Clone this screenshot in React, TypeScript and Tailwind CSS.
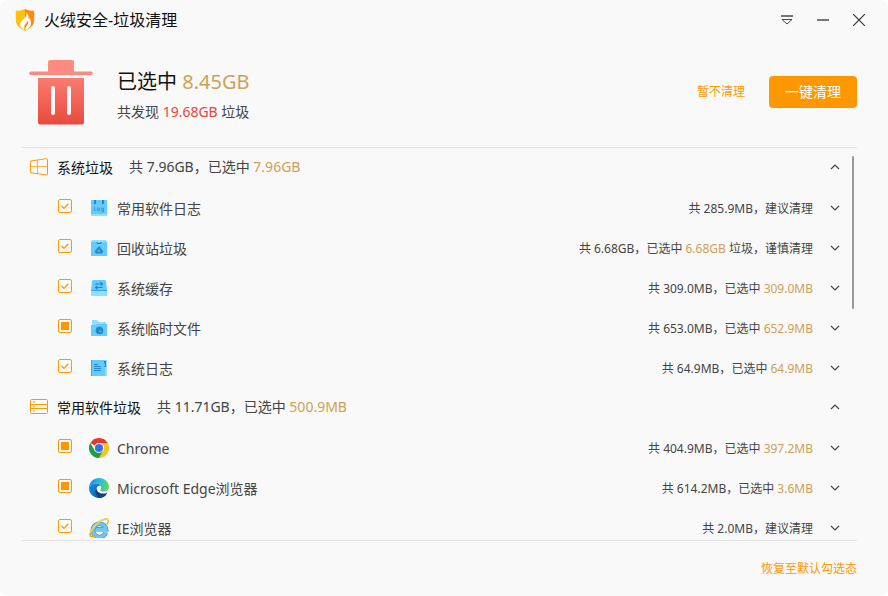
import { useEffect, useRef, useState, type ReactNode } from "react";

type CheckState = "checked" | "partial" | "none";

interface Item {
  name: string;
  icon: ReactNode;
  state: CheckState;
  total: string;
  selected?: string;
  advice?: string;
}

interface Group {
  name: string;
  icon: ReactNode;
  total: string;
  selected: string;
  items: Item[];
}

function ShieldLogo() {
  return (
    <svg width="20" height="22" viewBox="0 0 20 22" aria-hidden="true">
      <path d="M10 0C7 1.4 4 1.8.8 1.8V11c0 5 3.6 8.400 9.200 10.800Z" fill="#ffc010" />
      <path d="M10 0c3 1.400 6 1.800 9.200 1.800V11c0 5-3.600 8.400-9.200 10.800Z" fill="#ff8a0c" />
      <path
        d="M11.500 3.500c.4 3-1 4.500-3 6.500-2 2.100-3.800 4-3.300 6.600.4 2 2.300 3.200 4.200 4.200-.9-1.400-1-2.700-.1-4.200l4-5c.3 2.500-.6 4-2 5.600-1 1.200-1 2.600-.5 3.800 3.700-1.600 5.500-4.300 5.200-7.500-.2-1.900-.9-3-1-4.700-.3.800-.7 1.200-1.300 1.500.1-2.800-.3-5-2.200-6.800Z"
        fill="#fff"
      />
    </svg>
  );
}

function TrashIcon() {
  return (
    <svg width="64" height="65" viewBox="0 0 64 65" className="shrink-0" aria-hidden="true">
      <defs>
        <linearGradient id="trash" x1="0" y1="0" x2="0" y2="1">
          <stop offset="0" stopColor="#fa7b70" />
          <stop offset="1" stopColor="#e84b3c" />
        </linearGradient>
      </defs>
      <path d="M19 11.500V2a2 2 0 0 1 2-2h22a2 2 0 0 1 2 2v9.500h17a1.800 1.800 0 0 1 0 3.600H2a1.800 1.800 0 0 1 0-3.600Z" fill="#ff8a80" />
      <path
        d="M9 18h46v44.500a2 2 0 0 1-2 2H11a2 2 0 0 1-2-2ZM24 26a2 2 0 0 0-2 2v25a2 2 0 0 0 4 0V28a2 2 0 0 0-2-2Zm16 0a2 2 0 0 0-2 2v25a2 2 0 0 0 4 0V28a2 2 0 0 0-2-2Z"
        fill="url(#trash)"
        fillRule="evenodd"
      />
    </svg>
  );
}

function WindowsIcon() {
  return (
    <svg width="18" height="18" viewBox="0 0 18 18" fill="none" stroke="#ff9800" aria-hidden="true">
      <path d="M.6 3 16.500.7q1-.1 1 .8v14.700q0 .9-1 .8L.6 14.700Z" strokeLinejoin="round" />
      <path d="M7.500 2v13.700M.5 8.500h17" strokeOpacity=".75" />
    </svg>
  );
}

function DrawersIcon() {
  return (
    <svg width="18" height="16" viewBox="0 0 18 16" fill="none" stroke="#ff9800" aria-hidden="true">
      <rect x=".5" y=".5" width="17" height="14" rx="1" />
      <path d="M.5 5.500h17M.5 9.500h17" />
      <path d="M3 3h2M3 7.500h2M3 12h2" strokeWidth="1.500" strokeOpacity=".7" />
    </svg>
  );
}

function LogIcon() {
  return (
    <svg width="16" height="16" viewBox="0 0 16 16" aria-hidden="true">
      <path d="M0 0h16v16H0Z" fill="#62ccfe" />
      <path d="M0 14h16v2H0Z" fill="#91defe" />
      <path d="M3 0h2v4H3ZM11 0h2v4h-2Z" fill="#2488c6" />
      <path d="M3.500 7v3.500h1M6.500 8h2v2.500h-2ZM12.500 10.500h-2V8h2v4h-2" fill="none" stroke="#2488c6" strokeWidth=".7" />
    </svg>
  );
}

function RecycleIcon() {
  return (
    <svg width="16" height="16" viewBox="0 0 16 16" aria-hidden="true">
      <path d="M1.500 0h13L16 2v14H0V2Z" fill="#62ccfe" />
      <path d="M1.500 0h13L16 2H0Z" fill="#91defe" />
      <path d="M6 2v1.500h4V2" fill="none" stroke="#2488c6" />
      <path d="M7.500 7h1.200l3 4.500-.7 1.500H5l-.7-1.500Z" fill="#2488c6" stroke="#2488c6" strokeLinejoin="round" />
      <path d="m8 9.300-1.200 1.900h2.700" fill="none" stroke="#62ccfe" strokeWidth=".9" />
    </svg>
  );
}

function CacheIcon() {
  return (
    <svg width="16" height="16" viewBox="0 0 16 16" aria-hidden="true">
      <path d="M2 0h12l1 1 1 10H0L1 1Z" fill="#62ccfe" />
      <path d="M0 11h16v5H0Z" fill="#91defe" />
      <path d="M0 10.500h16" stroke="#38a9e2" />
      <path d="M5 5V4h6M9.500 2l2 2-2 1.500M11 6.500v1H5M6.500 9.500l-2-2L6.500 6" fill="none" stroke="#2488c6" strokeWidth="1.100" />
    </svg>
  );
}

function TempFolderIcon() {
  return (
    <svg width="16" height="16" viewBox="0 0 16 16" aria-hidden="true">
      <path d="M1 0h5l2 2h7v5H1Z" fill="#91defe" />
      <path d="M0 5h5l1-1h10v12H0Z" fill="#62ccfe" />
      <circle cx="8.500" cy="10.500" r="3.800" fill="#2488c6" />
      <path d="M8.500 10.500v.8h2" fill="none" stroke="#62ccfe" />
    </svg>
  );
}

function NotebookIcon() {
  return (
    <svg width="16" height="16" viewBox="0 0 16 16" aria-hidden="true">
      <path d="M0 0h16v16H0Z" fill="#62ccfe" />
      <path d="M14 0h2v16h-2Z" fill="#91defe" />
      <path d="M0 0h1v16H0Z" fill="#38a9e2" />
      <path d="M13 1h2v6h-2l1-1.500V4l-1-1Z" fill="#2488c6" />
      <path d="M3 4.500h4M3 6.500h7M3 8.500h7M3 10.500h7" stroke="#2488c6" />
    </svg>
  );
}

function ChromeIcon() {
  return (
    <svg width="20" height="20" viewBox="0 0 48 48" aria-hidden="true">
      <path d="M24 24 3.200 12A24 24 0 0 1 44.800 12H24Z" fill="#e33b2e" />
      <path d="M24 12h20.800A24 24 0 0 1 24 48l10.400-18Z" fill="#fcc31e" />
      <path d="M3.200 12 13.600 30 34.400 30 24 48A24 24 0 0 1 3.200 12Z" fill="#259b48" />
      <circle cx="24" cy="24" r="12" fill="#fff" />
      <circle cx="24" cy="24" r="9.800" fill="#2f73e8" />
    </svg>
  );
}

function EdgeIcon() {
  return (
    <svg width="20" height="20" viewBox="0 0 20 20" aria-hidden="true">
      <defs>
        <linearGradient id="edge-top" x1="0" y1=".4" x2="1" y2=".5">
          <stop offset="0" stopColor="#1690dc" />
          <stop offset=".5" stopColor="#27bddb" />
          <stop offset="1" stopColor="#65d957" />
        </linearGradient>
        <linearGradient id="edge-body" x1="0" y1="0" x2="1" y2="1">
          <stop offset="0" stopColor="#1591df" />
          <stop offset="1" stopColor="#0b549f" />
        </linearGradient>
      </defs>
      <path d="M.1 9C.7 3.800 4.800 0 10 0c5.700 0 10 4.200 10 8.600 0 3-2.200 5-5 5-2.200 0-3.600-.8-3.600-1.700 0-.6.8-.9.8-2.300C12.200 7.400 10 5.600 7 5.600 3.700 5.600 1.300 7 .1 9Z" fill="url(#edge-top)" />
      <path d="M.1 9C1.300 7 3.700 5.600 7 5.600c2.300 0 4.100 1 4.800 2.400C9.600 7 7.500 8.600 7.500 11.500c0 4.500 5 6.700 9.700 5.400A10 10 0 0 1 .1 9Z" fill="url(#edge-body)" />
      <path d="M7.600 10.500c.3 4.700 5.700 6.300 10.800 4.200a10 10 0 0 1-7 5.200C7.300 19 5 14 7.600 10.500Z" fill="#124083" />
    </svg>
  );
}

function IeIcon() {
  return (
    <svg width="20" height="20" viewBox="0 0 20 20" fill="none" aria-hidden="true">
      <path d="M16.800 14.300A6.600 6.600 0 1 1 17 11.300H6.500" stroke="#3f93cb" strokeWidth="4.600" />
      <path d="M16.800 14.300A6.600 6.600 0 1 1 17 11.300H6.500" stroke="#72c6ee" strokeWidth="3.200" />
      <path d="M18 6.500C19.600 2.800 19.600.8 17 1 11 1.500 3.400 8.500 1.200 15.500c-.8 3 1.500 4 5 2.300" stroke="#e2ad16" strokeWidth="1.600" />
      <path d="M18.500 4.500C19 2 18.500.7 16.500 1 11 1.800 3.500 9 1.400 15" stroke="#ffd93a" strokeWidth="1.200" />
    </svg>
  );
}

function Chevron({ up = false }: { up?: boolean }) {
  return (
    <svg width="10" height="6" viewBox="0 0 10 6" fill="none" stroke="#444" strokeWidth="1.200" aria-hidden="true">
      <path d={up ? "M1 5 5 1l4 4" : "m1 1 4 4 4-4"} />
    </svg>
  );
}

function TriCheckbox({ initial, label }: { initial: CheckState; label: string }) {
  const [state, setState] = useState<CheckState>(initial);
  const ref = useRef<HTMLInputElement>(null);

  useEffect(() => {
    if (ref.current) ref.current.indeterminate = state === "partial";
  }, [state]);

  return (
    <span className="mb-1 grid size-[14px] shrink-0 place-items-center">
      <input
        ref={ref}
        id={label}
        type="checkbox"
        checked={state === "checked"}
        onChange={() => setState(state === "checked" ? "none" : "checked")}
        className="col-start-1 row-start-1 size-[14px] appearance-none rounded-xs border border-[#ff9800]"
      />
      {state === "checked" && (
        <svg className="pointer-events-none col-start-1 row-start-1" width="8" height="8" viewBox="0 0 8 8" fill="none" stroke="#ff9800" strokeWidth="1.300" aria-hidden="true">
          <path d="m.6 4 2.400 2.400 4.400-4.600" />
        </svg>
      )}
      {state === "partial" && <span className="pointer-events-none col-start-1 row-start-1 size-2 bg-[#ff9800]" />}
    </span>
  );
}

const groups: Group[] = [
  {
    name: "系统垃圾",
    icon: <WindowsIcon />,
    total: "7.96GB",
    selected: "7.96GB",
    items: [
      { name: "常用软件日志", icon: <LogIcon />, state: "checked", total: "285.9MB", advice: "建议清理" },
      { name: "回收站垃圾", icon: <RecycleIcon />, state: "checked", total: "6.68GB", selected: "6.68GB", advice: "谨慎清理" },
      { name: "系统缓存", icon: <CacheIcon />, state: "checked", total: "309.0MB", selected: "309.0MB" },
      { name: "系统临时文件", icon: <TempFolderIcon />, state: "partial", total: "653.0MB", selected: "652.9MB" },
      { name: "系统日志", icon: <NotebookIcon />, state: "checked", total: "64.9MB", selected: "64.9MB" },
    ],
  },
  {
    name: "常用软件垃圾",
    icon: <DrawersIcon />,
    total: "11.71GB",
    selected: "500.9MB",
    items: [
      { name: "Chrome", icon: <ChromeIcon />, state: "partial", total: "404.9MB", selected: "397.2MB" },
      { name: "Microsoft Edge浏览器", icon: <EdgeIcon />, state: "partial", total: "614.2MB", selected: "3.6MB" },
      { name: "IE浏览器", icon: <IeIcon />, state: "checked", total: "2.0MB", advice: "建议清理" },
    ],
  },
];

function ItemRow({ item }: { item: Item }) {
  return (
    <li className="flex h-10 items-center pl-[37px]">
      <TriCheckbox initial={item.state} label={item.name} />
      <span className="ml-4 flex w-[22px] shrink-0 justify-center">{item.icon}</span>
      <label htmlFor={item.name} className="ml-[7px] pt-0.5 text-sm">
        {item.name}
      </label>
      <span className="ml-auto pt-0.5 text-xs">
        共 {item.total}，
        {item.selected && (
          <>
            已选中 <span className="text-[#cfa056]">{item.selected}</span>
          </>
        )}
        {item.selected && item.advice && " 垃圾，"}
        {item.advice}
      </span>
      <button type="button" aria-label={`展开${item.name}`} className="ml-3 grid size-5 place-items-center">
        <Chevron />
      </button>
    </li>
  );
}

function GroupSection({ group }: { group: Group }) {
  return (
    <section>
      <div className="flex h-10 items-center pb-0.5 pl-[9px]">
        {group.icon}
        <h2 className="ml-[9px] pt-0.5 text-sm text-[#111]">{group.name}</h2>
        <p className="ml-4 text-sm">
          共 {group.total}，已选中 <span className="text-[#cfa056]">{group.selected}</span>
        </p>
        <button type="button" aria-label={`收起${group.name}`} className="ml-auto grid size-5 place-items-center">
          <Chevron up />
        </button>
      </div>
      <ul>
        {group.items.map((item) => (
          <ItemRow key={item.name} item={item} />
        ))}
      </ul>
    </section>
  );
}

export default function App() {
  return (
    <div lang="zh-CN" className="h-screen bg-white font-['Noto_Sans','Noto_Sans_CJK_SC',sans-serif] text-[#444]">
      <div className="flex h-full flex-col overflow-hidden rounded-lg bg-[#f9f9f9]">
        <header className="flex h-10 shrink-0 items-center pr-[19px] pl-[15px]">
          <ShieldLogo />
          <h1 className="ml-[9px] text-base text-[#111]">火绒安全-垃圾清理</h1>
          <div className="ml-auto flex gap-4">
            <button type="button" aria-label="菜单" className="grid size-5 place-items-center">
              <svg width="12" height="10" viewBox="0 0 12 10" fill="none" stroke="#444" aria-hidden="true">
                <path d="M0 1h12" strokeWidth="2" stroke="#777" />
                <path d="M1 4.500h10L6 9Z" />
              </svg>
            </button>
            <button type="button" aria-label="最小化" className="grid size-5 place-items-center">
              <span className="h-0.5 w-3 bg-[#777]" />
            </button>
            <button type="button" aria-label="关闭" className="grid size-5 place-items-center">
              <svg width="12" height="12" viewBox="0 0 12 12" stroke="#333" strokeWidth="1.200" aria-hidden="true">
                <path d="m0 0 12 12M12 0 0 12" />
              </svg>
            </button>
          </div>
        </header>

        <main className="mr-[31px] ml-[21px] flex min-h-0 flex-1 flex-col">
          <div className="flex h-[108px] shrink-0 items-center border-b border-[#e4e4e4] pb-[3px] pl-2">
            <TrashIcon />
            <div className="ml-6 pt-[7px]">
              <p className="text-xl leading-8 text-[#111]">
                已选中 <span className="text-[#cfa056]">8.45GB</span>
              </p>
              <p className="text-sm leading-7">
                共发现 <span className="text-[#e8453c]">19.68GB</span> 垃圾
              </p>
            </div>
            <button type="button" className="ml-auto text-xs text-[#ff9800]">
              暂不清理
            </button>
            <button type="button" className="ml-6 h-8 w-[88px] rounded-sm bg-[#ff9800] text-sm text-white">
              一键清理
            </button>
          </div>

          <div className="relative min-h-0 flex-1 overflow-hidden border-b border-[#e4e4e4] pr-3">
            {groups.map((group) => (
              <GroupSection key={group.name} group={group} />
            ))}
            <div className="absolute top-2 right-[3px] h-[153px] w-0.5 rounded-full bg-[#999]" />
          </div>
        </main>

        <footer className="flex h-[55px] shrink-0 items-center justify-end pr-[31px]">
          <button type="button" className="text-xs text-[#ff9800]">
            恢复至默认勾选态
          </button>
        </footer>
      </div>
    </div>
  );
}
